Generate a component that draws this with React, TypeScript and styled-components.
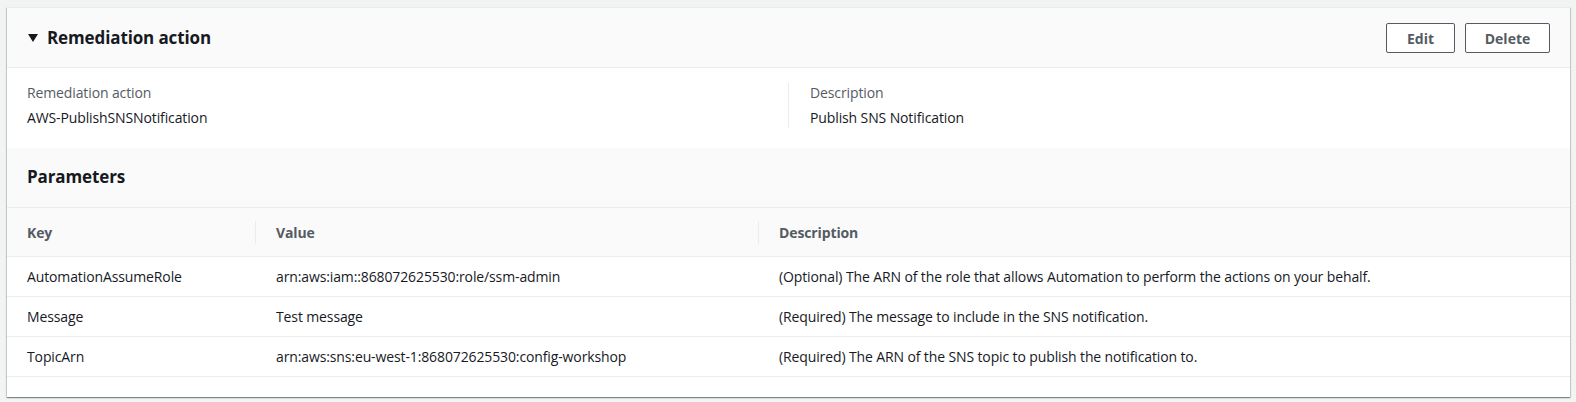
import React from "react";
import styled, { createGlobalStyle } from "styled-components";

const GlobalStyle = createGlobalStyle`
  html, body { margin: 0; padding: 0; background: #f2f3f3; }
  body {
    font-family: "Open Sans", "Noto Sans", Arial, sans-serif;
    font-size: 14px;
    color: #16191f;
    letter-spacing: -0.12px;
    -webkit-font-smoothing: antialiased;
  }
  * { box-sizing: border-box; }
`;

const Page = styled.div`
  padding: 7px 6px 5px 7px;
`;

const Container = styled.section`
  background: #ffffff;
  border-top: 1px solid #eaeded;
  box-shadow: 0 1px 1px 0 rgba(0, 28, 36, 0.3), 1px 1px 1px 0 rgba(0, 28, 36, 0.15),
    -1px 1px 1px 0 rgba(0, 28, 36, 0.15);
  padding-bottom: 20px;
`;

const Header = styled.div`
  display: flex;
  align-items: center;
  justify-content: space-between;
  height: 60px;
  padding: 0 20px 0 21px;
  background: #fafafa;
  border-bottom: 1px solid #eaeded;
`;

const Title = styled.h2`
  display: flex;
  align-items: center;
  gap: 9px;
  margin: 0;
  font-size: 17px;
  font-weight: 700;
  line-height: 22px;
  color: #16191f;
`;

const Caret = styled.svg`
  width: 10px;
  height: 8px;
  display: block;
`;

const Actions = styled.div`
  display: flex;
  gap: 10px;
  padding-top: 1px;
`;

const Button = styled.button<{ $w: number }>`
  width: ${(p) => p.$w}px;
  height: 30px;
  padding: 0;
  border: 1px solid #545b64;
  border-radius: 2px;
  background: #ffffff;
  color: #545b64;
  font-family: inherit;
  font-size: 14px;
  font-weight: 700;
  letter-spacing: 0;
  cursor: pointer;
`;

const Details = styled.div`
  display: grid;
  grid-template-columns: 761px 1fr;
  padding: 15px 20px 20px 20px;
`;

const DetailCol = styled.div<{ $divider?: boolean }>`
  display: flex;
  flex-direction: column;
  gap: 5px;
  ${(p) => (p.$divider ? "border-left: 1px solid #eaeded; padding-left: 21px;" : "")}
`;

const Label = styled.div`
  color: #545b64;
  line-height: 20px;
`;

const Value = styled.div`
  color: #16191f;
  line-height: 20px;
`;

const SubHeader = styled.div`
  display: flex;
  align-items: center;
  height: 60px;
  padding: 0 20px 3px;
  background: #fafafa;
  border-bottom: 1px solid #eaeded;
`;

const SubTitle = styled.h3`
  margin: 0;
  font-size: 17px;
  font-weight: 700;
  color: #16191f;
`;

const Table = styled.div`
  display: grid;
  grid-template-columns: 248px 503px 1fr;
`;

const HeadCell = styled.div<{ $divider?: boolean }>`
  position: relative;
  display: flex;
  align-items: center;
  height: 49px;
  padding-left: ${(p) => (p.$divider ? "21px" : "20px")};
  background: #fafafa;
  border-bottom: 1px solid #eaeded;
  color: #545b64;
  font-weight: 700;
  ${(p) =>
    p.$divider
      ? `&::before {
    content: "";
    position: absolute;
    left: 0;
    top: 13px;
    height: 23px;
    border-left: 1px solid #eaeded;
  }`
      : ""}
`;

const Cell = styled.div<{ $divider?: boolean }>`
  display: flex;
  align-items: center;
  height: 40px;
  padding-left: ${(p) => (p.$divider ? "21px" : "20px")};
  border-bottom: 1px solid #eaeded;
  color: #16191f;
  white-space: nowrap;
`;

const rows = [
  {
    key: "AutomationAssumeRole",
    value: "arn:aws:iam::868072625530:role/ssm-admin",
    desc: "(Optional) The ARN of the role that allows Automation to perform the actions on your behalf.",
  },
  {
    key: "Message",
    value: "Test message",
    desc: "(Required) The message to include in the SNS notification.",
  },
  {
    key: "TopicArn",
    value: "arn:aws:sns:eu-west-1:868072625530:config-workshop",
    desc: "(Required) The ARN of the SNS topic to publish the notification to.",
  },
];

export default function App() {
  return (
    <>
      <GlobalStyle />
      <Page>
        <Container>
          <Header>
            <Title>
              <Caret viewBox="0 0 10 8">
                <path d="M0 0 H10 L5 8 Z" fill="#16191f" />
              </Caret>
              Remediation action
            </Title>
            <Actions>
              <Button $w={69}>Edit</Button>
              <Button $w={85}>Delete</Button>
            </Actions>
          </Header>
          <Details>
            <DetailCol>
              <Label>Remediation action</Label>
              <Value>AWS-PublishSNSNotification</Value>
            </DetailCol>
            <DetailCol $divider>
              <Label>Description</Label>
              <Value>Publish SNS Notification</Value>
            </DetailCol>
          </Details>
          <SubHeader>
            <SubTitle>Parameters</SubTitle>
          </SubHeader>
          <Table>
            <HeadCell>Key</HeadCell>
            <HeadCell $divider>Value</HeadCell>
            <HeadCell $divider>Description</HeadCell>
            {rows.map((r) => (
              <React.Fragment key={r.key}>
                <Cell>{r.key}</Cell>
                <Cell $divider>{r.value}</Cell>
                <Cell $divider>{r.desc}</Cell>
              </React.Fragment>
            ))}
          </Table>
        </Container>
      </Page>
    </>
  );
}
